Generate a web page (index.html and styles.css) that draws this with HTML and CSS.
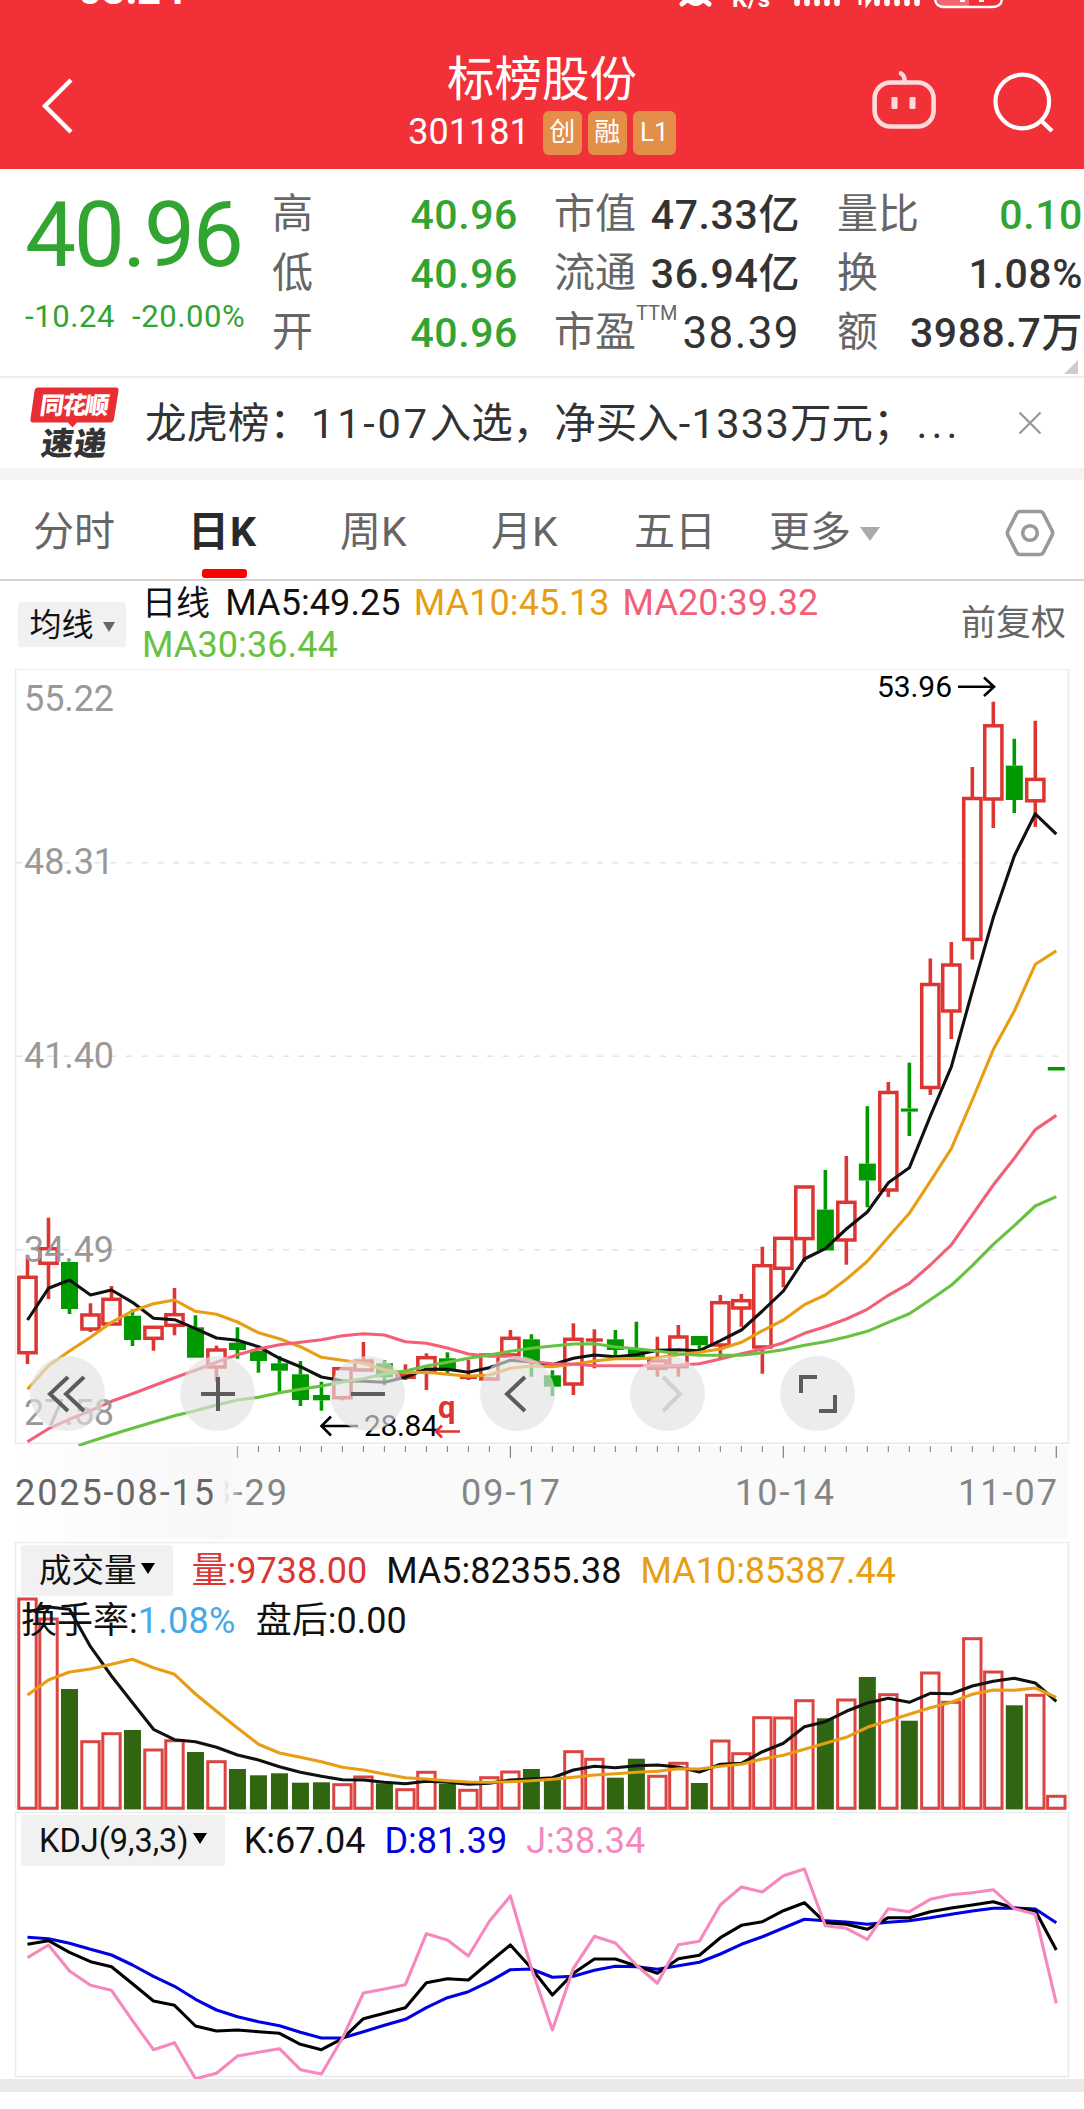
FILE: index.html
```html
<!DOCTYPE html>
<html lang="zh-CN">
<head>
<meta charset="utf-8">
<title>标榜股份 301181</title>
<link rel="stylesheet" href="styles.css">
</head>
<body>
<header class="header">
  <svg class="status" viewBox="0 0 1084 20" aria-hidden="true">
    <text x="78" y="3.5" class="status-time" textLength="107">03:24</text>
    <path d="M682 4 Q695 -8 709 4" stroke="#fff" stroke-width="5" fill="none" stroke-linecap="round"/>
    <path d="M685 0 H706 Q696 12 685 0Z" fill="#fff"/>
    <text x="732" y="7" class="status-unit" textLength="38">K/s</text>
    <path d="M797 -6V3.5M807 -6V3.5M817 -6V3.5M827 -6V3.5M837 -6V3.5M877 -6V3.5M887 -6V3.5M897 -6V3.5M907 -6V3.5M917 -6V3.5" stroke="#fff" stroke-width="5.6" stroke-linecap="round"/>
    <path d="M860 -4V5M867 -4V4L872 -3" stroke="#fff" stroke-width="3" fill="none"/>
    <path d="M936 -6H969V7H946Q938 6 936 -2Z" fill="#f76570"/>
    <path d="M935 -6V-2Q935 7 945 7H992Q1002 7 1002 -2V-6" stroke="#fff" stroke-width="2.4" fill="none"/>
    <path d="M960 0H965M979 0H984" stroke="#fff" stroke-width="4"/>
  </svg>
  <div class="bar">
    <svg class="back" viewBox="0 0 36 60"><path d="M32 4L6 30L32 56" fill="none" stroke="#fff" stroke-width="4.400"/></svg>
    <div class="heading">
      <h1 class="name">标榜股份</h1>
      <div class="code-row">
        <span class="code">301181</span>
        <span class="badge">创</span><span class="badge">融</span><span class="badge wide">L1</span>
      </div>
    </div>
    <div class="actions">
      <svg class="robot" viewBox="0 0 66 60">
        <g fill="none" stroke="#ffdadd" stroke-width="4.6">
          <rect x="3.6" y="13.5" width="59" height="44" rx="16"/>
          <path d="M30 4.5Q33.5 6 33.8 13" stroke-linecap="round"/>
        </g>
        <rect x="20.5" y="28" width="6" height="12" rx="1.2" fill="#ffdadd"/><rect x="38.5" y="28" width="6" height="12" rx="1.2" fill="#ffdadd"/>
      </svg>
      <svg class="search" viewBox="0 0 64 64">
        <circle cx="30.3" cy="31.500" r="26.8" fill="none" stroke="#fff" stroke-width="4.200"/>
        <path d="M49 50.5L60 61" stroke="#fff" stroke-width="4.4"/>
      </svg>
    </div>
  </div>
</header>

<section class="quote">
  <div class="last">
    <div class="price">40.96</div>
    <div class="change"><span>-10.24</span><span>-20.00%</span></div>
  </div>
  <dl class="stats ohl">
    <div><dt>高</dt><dd class="down">40.96</dd></div>
    <div><dt>低</dt><dd class="down">40.96</dd></div>
    <div><dt>开</dt><dd class="down">40.96</dd></div>
  </dl>
  <dl class="stats cap">
    <div><dt>市值</dt><dd>47.33亿</dd></div>
    <div><dt>流通</dt><dd>36.94亿</dd></div>
    <div><dt>市盈<sup>TTM</sup></dt><dd class="light">38.39</dd></div>
  </dl>
  <dl class="stats flow">
    <div><dt>量比</dt><dd class="down">0.10</dd></div>
    <div><dt>换</dt><dd>1.08%</dd></div>
    <div><dt>额</dt><dd>3988.7万</dd></div>
  </dl>
  <i class="corner"></i>
</section>

<section class="news">
  <svg class="logo" viewBox="0 0 90 74">
    <path d="M8 0.5H86Q89 0.5 88.5 4L84 32Q83.500 35.500 80 35.500H47L42.500 40.500L38 35.500H3Q0 35.500 0.500 32L4.500 4Q5 0.500 8 0.500Z" fill="#e72f33"/>
    <text transform="translate(9 26.500) skewX(-8)" class="logo-top" textLength="69">同花顺</text>
    <text transform="translate(10 68) skewX(-8)" class="logo-bottom" textLength="65">速递</text>
  </svg>
  <p class="headline">龙虎榜：<span class="n1">11-07</span>入选，净买入<span class="n2">-1333</span>万元；<span class="dots">...</span></p>
  <svg class="close" viewBox="0 0 24 24"><path d="M1.500 1.500L22.500 22.500M22.500 1.500L1.500 22.500" stroke="#999" stroke-width="2.300"/></svg>
</section>

<nav class="tabs">
  <a>分时</a><a class="on">日K</a><a>周K</a><a>月K</a><a>五日</a><a class="more">更多<i class="tri"></i></a>
  <svg class="hex" viewBox="0 0 50 48"><g fill="none" stroke="#999" stroke-width="3.600"><path d="M15 2.500H35Q37 2.500 38 4L47.200 22Q48 24 47.200 26L38 44Q37 45.500 35 45.500H15Q13 45.500 12 44L2.800 26Q2 24 2.800 22L12 4Q13 2.500 15 2.500Z"/><circle cx="25" cy="24" r="7.300"/></g></svg>
</nav>

<section class="ma">
  <button class="pick ma-pick">均线<i class="tri"></i></button>
  <p class="ma-list"><span>日线</span><span>MA5:49.25</span><span class="c-orange">MA10:45.13</span><span class="c-pink">MA20:39.32</span><span class="c-green">MA30:36.44</span></p>
  <span class="adjust">前复权</span>
</section>

<section class="panel kline">
  <svg id="kline" viewBox="0 669 1084 873"></svg>
  <div class="controls">
    <button><svg viewBox="0 0 40 40"><path d="M22 3L4 20L22 37M38 3L20 20L38 37"/></svg></button>
    <button><svg viewBox="0 0 40 40"><path d="M3 20H37M20 3V37"/></svg></button>
    <button><svg viewBox="0 0 40 40"><path d="M3 20H37"/></svg></button>
    <button><svg viewBox="0 0 40 40"><path d="M27 3L9 20L27 37"/></svg></button>
    <button class="off"><svg viewBox="0 0 40 40"><path d="M15 3L32 20L15 37"/></svg></button>
    <button><svg viewBox="0 0 40 40"><path d="M3 19V3H19M37 21V37H21"/></svg></button>
  </div>
</section>

<section class="panel volume">
  <svg id="volume" viewBox="0 1542 1084 270"></svg>
  <div class="legend">
    <p><button class="pick">成交量<i class="tri"></i></button><span class="c-red">量:9738.00</span><span>MA5:82355.38</span><span class="c-orange">MA10:85387.44</span></p>
    <p class="second"><span>换手率:<b>1.08%</b></span><span>盘后:0.00</span></p>
  </div>
</section>

<section class="panel kdj">
  <svg id="kdj" viewBox="0 1812 1084 267"></svg>
  <div class="legend">
    <p><button class="pick">KDJ(9,3,3)<i class="tri"></i></button><span>K:67.04</span><span class="c-blue">D:81.39</span><span class="c-rose">J:38.34</span></p>
  </div>
</section>
<div class="band"></div>
<script src="chart.js"></script>
</body>
</html>
```
FILE: styles.css
```css
* { box-sizing: border-box; margin: 0; padding: 0; }
body { width: 1084px; height: 2109px; overflow: hidden; background: #fff; color: #111; font-family: Roboto, "Noto Sans CJK SC", sans-serif; }
svg { display: block; }
button { border: 0; font: inherit; color: inherit; }
i { font-style: normal; }

.header { height: 169px; background: #f23037; color: #fff; display: flex; flex-direction: column; }
.status { width: 1084px; height: 20px; }
.status text { fill: #fff; }
.status-time { font-size: 42px; font-weight: 700; }
.status-unit { font-size: 24px; font-weight: 700; }
.bar { flex: 1; display: grid; grid-template-columns: 300px 484px 300px; }
.back { width: 36px; height: 60px; margin: 56px 0 0 39px; }
.heading { display: flex; flex-direction: column; align-items: center; }
.name { font-size: 47.500px; font-weight: 400; line-height: 60px; margin-top: 30px; }
.code-row { display: flex; align-items: center; gap: 6px; height: 44px; margin-top: 1px; }
.code { font-size: 36px; margin-right: 7px; line-height: 40px; padding-bottom: 2px; }
.badge { width: 39px; height: 44px; border-radius: 6px; background: #e38e49; font-size: 26px; line-height: 42px; text-align: center; }
.badge.wide { width: 43px; }
.actions { display: flex; }
.robot { width: 66px; height: 60px; margin: 49px 0 0 87px; }
.search { width: 64px; height: 64px; margin: 50px 0 0 55px; }

.quote { height: 209px; border-bottom: 2px solid #eee; position: relative; display: flex; padding-top: 21px; }
.last { width: 272px; padding-left: 25px; color: #32a432; }
.price { font-size: 91px; line-height: 90px; letter-spacing: -2.400px; }
.change { display: flex; gap: 17px; font-size: 31px; line-height: 40px; margin-top: 17px; letter-spacing: .6px; }
.stats { font-size: 41px; }
.stats div { display: flex; justify-content: space-between; height: 59px; line-height: 48px; }
.stats dt { color: #666; white-space: nowrap; }
.stats dd { color: #333; font-weight: 500; white-space: nowrap; letter-spacing: .6px; padding-top: 1px; }
.stats dd.down { color: #32a432; }
.stats dd.light { font-weight: 400; font-size: 44px; letter-spacing: 1.400px; }
.stats sup { font-size: 20px; line-height: 0; vertical-align: 26px; }
.ohl { width: 246px; }
.cap { width: 246px; margin-left: 36px; }
.flow { width: 246px; margin-left: 37px; }
.corner { position: absolute; right: 6px; bottom: 2px; border: 7.5px solid; border-color: transparent #ccc #ccc transparent; }

.news { height: 102px; border-bottom: 12px solid #f4f4f4; display: flex; align-items: center; }
.logo { width: 90px; height: 74px; margin-left: 30px; margin-top: 2px; }
.logo-top { font: 900 24px "Noto Sans CJK SC"; fill: #fff; }
.logo-bottom { font: 900 32px "Noto Sans CJK SC"; fill: #333; }
.headline { width: 850px; margin-left: 25px; font-size: 41.500px; color: #333; white-space: nowrap; line-height: 60px; padding-top: 1px; }
.n1 { letter-spacing: 2.800px; }
.n2 { letter-spacing: 1.300px; }
.dots { letter-spacing: 4px; margin-left: 2px; }
.close { width: 24px; height: 24px; margin-left: 23px; }

.tabs { height: 101px; border-bottom: 2px solid #d4d4d4; display: flex; position: relative; font-size: 41px; line-height: 60px; padding: 22px 0 0 33px; color: #666; }
.tabs a { width: 155px; height: 79px; white-space: nowrap; }
.tabs a:nth-child(2) { width: 152px; }
.tabs a:nth-child(3) { width: 151px; }
.tabs a:nth-child(4) { width: 143px; }
.tabs a:nth-child(5) { width: 135px; }
.tabs .on { color: #2a2a2a; font-weight: 700; position: relative; letter-spacing: 1px; }
.tabs .on::after { content: ""; position: absolute; left: 14px; bottom: 3px; width: 45px; height: 9px; border-radius: 3px; background: #f00; }
.tabs .more { width: 236px; }
.tri { display: inline-block; border: 7px solid transparent; border-top: 10px solid #000; border-bottom: 0; vertical-align: middle; margin-left: 5px; }
.more .tri { border-width: 14px 10.500px 0; border-top-color: #aaa; margin-left: 9px; position: relative; top: -1px; }
.hex { width: 50px; height: 48px; margin-top: 7px; }

.ma { height: 88px; display: flex; padding-left: 18px; position: relative; }
.pick { background: #f1f1f1; border-radius: 3px; white-space: nowrap; }
.ma-pick { width: 108px; height: 45px; margin-top: 21px; font-size: 32px; line-height: 42px; }
.ma-pick .tri { border-width: 10px 6.500px 0; border-top-color: #666; margin-left: 9px; }
.ma-list { width: 740px; margin-left: 16px; padding-top: 1px; display: flex; flex-wrap: wrap; align-content: flex-start; font-size: 36px; line-height: 42px; column-gap: 13px; letter-spacing: .1px; }
.ma-list span:first-child { font-size: 34px; margin-right: 2px; }
.adjust { font-size: 35px; line-height: 42px; margin: 22px 0 0 79px; color: #666; white-space: nowrap; }
.c-orange { color: #e79d14; } .c-pink { color: #f45f78; } .c-green { color: #67c241; }
.c-red { color: #dc3633; } .c-blue { color: #0000e0; } .c-rose { color: #f588be; }

.panel { position: relative; }
.kline { height: 873px; } .volume { height: 270px; } .kdj { height: 267px; }
.panel > svg { width: 1084px; height: 100%; }
.panel > svg text { font-family: Roboto, sans-serif; }
.controls { position: absolute; left: 30px; top: 687px; display: flex; gap: 75px; }
.controls button { width: 75px; height: 75px; border-radius: 50%; background: rgba(226, 226, 226, .65); display: grid; place-items: center; }
.controls svg { width: 40px; height: 40px; fill: none; stroke: #5c5c5c; stroke-width: 4; }
.controls button:first-child svg { margin-left: -4px; }
.controls .off svg { stroke: #d0d0d0; }
.legend { position: absolute; left: 21px; top: 3px; }
.legend p { display: flex; gap: 19px; font-size: 36px; line-height: 53px; white-space: nowrap; }
.legend .pick { height: 51px; padding: 0 18px; font-size: 32.500px; line-height: 48px; }
.legend .tri { position: relative; top: -4px; border-width: 11px 7.500px 0; margin-left: 4px; }
.legend .second { gap: 20px; line-height: 47px; }
.legend b { font-weight: 400; color: #46a9e8; letter-spacing: .3px; }
.band { height: 13px; background: #eaeaea; }
```
FILE: chart.js
```js
const NS = 'http://www.w3.org/2000/svg';
const STEP = 20.996, X0 = 27.5;
const cx = i => X0 + STEP * i;
const RED = '#dc3633', GREEN = '#009900';

function add(svg, tag, attrs, text) {
  const el = document.createElementNS(NS, tag);
  for (const k in attrs) el.setAttribute(k, attrs[k]);
  if (text) el.textContent = text;
  svg.appendChild(el);
  return el;
}
function line(svg, ys, color, start = 0, width = 3.1) {
  const points = ys.map((y, i) => `${cx(i + start).toFixed(1)},${y}`).join(' ');
  add(svg, 'polyline', { points, fill: 'none', stroke: color, 'stroke-width': width, 'stroke-linejoin': 'round' });
}
function frame(svg, y1, y2) {
  add(svg, 'path', { d: `M15.500 ${y1}H1068.500V${y2}H15.500Z`, fill: 'none', stroke: '#eaeaea', 'stroke-width': 1.6 });
}
function label(svg, x, y, w, size, color, text) {
  add(svg, 'text', { x, y, textLength: w, 'font-size': size, fill: color }, text);
}

// direction, body top, body bottom, high, low
const candles = [
  ['r',1277.3,1352.7,1255.3,1364],['r',1248.7,1263.3,1217.7,1299],['g',1262,1309,1262,1314],['r',1315,1329,1303.3,1332],
  ['r',1299.3,1324,1286,1324],['g',1315.7,1340,1309.3,1346],['r',1327.3,1338.3,1327.3,1350.7],['r',1314.7,1325.3,1288,1335.3],
  ['g',1327.3,1357.7,1315.3,1357.7],['r',1350,1367,1345.7,1381.7],['g',1342.7,1350,1327.3,1358.7],['g',1350.7,1361,1350.7,1372.7],
  ['g',1363.3,1370.7,1356,1392],['g',1374.3,1400,1361,1406],['g',1395,1400.3,1381.7,1410.7],['r',1368.7,1397.7,1368.7,1400.3],
  ['r',1361,1370,1342,1371.3],['g',1363.3,1377.3,1360,1385.3],['r',1374.3,1377.3,1364.3,1380],['r',1357.7,1371.7,1353.3,1390],
  ['g',1358.3,1371,1352.3,1373.3],['r',1376.7,1378,1360,1380],['r',1355,1379,1355,1379],['r',1338.3,1355,1330,1355],
  ['g',1339.3,1361,1334.3,1376.7],['g',1375.3,1386.7,1370.3,1396],['r',1339.3,1384,1323.3,1395],['r',1339.3,1340.2,1329.3,1368.3],
  ['g',1339.3,1350,1330,1355.7],['g',1348.3,1357.3,1321.7,1357.3],['r',1361,1368.3,1336.7,1376.7],['r',1337,1366.7,1325,1376.7],
  ['g',1336,1345.3,1336,1350.7],['r',1302.7,1345,1295,1359],['r',1300.7,1308,1294,1326.7],['r',1265.7,1347,1246.7,1373.7],
  ['r',1238.3,1268.3,1238.3,1287.3],['r',1187,1238.600,1187,1262],['g',1209.6,1250.5,1170,1250.5],['r',1202.3,1240,1156,1264.7],
  ['g',1163.6,1180.5,1106.2,1207.3],['r',1092.5,1190,1082,1197],['g',1108.5,1111.6,1062.6,1136],['r',984.5,1087.5,958.5,1095],
  ['r',965,1011,942,1039],['r',798.5,939.4,767,959.6],['r',725.8,799,701.7,828],['g',765.6,800,738.8,813],
  ['r',779.4,800.8,720.8,826.9],['g',1067,1070.5,1067,1070.5]
];
const ma5 = [1320,1288.3,1280,1295,1290,1302.3,1318.3,1319.7,1328.7,1338,1340.3,1346.7,1358.3,1366.7,1377,1380.7,1381.3,1382.3,1377.3,1369,1369.3,1372.3,1367.7,1360.3,1362,1364.7,1358.3,1355,1356.7,1354.7,1350.3,1349.7,1350.7,1340.7,1330,1311,1291,1259,1248.7,1229,1212,1182.8,1167.8,1116.2,1066.8,991,917.6,856,813.8,834.1];
const ma10 = [1389.3,1365.7,1351,1337.3,1322.3,1311,1303.7,1300,1311.3,1314.3,1322,1332.7,1338.7,1346.7,1357.3,1360.3,1363.3,1369.7,1372.7,1372.3,1374.3,1376.3,1375,1368.3,1366,1366.7,1364.3,1361,1358.7,1358.7,1357.7,1354.7,1352.3,1349,1342.3,1330.7,1320,1304.7,1295,1279.3,1261.3,1237.3,1213.3,1181.3,1148.7,1100,1049.6,1011,964.3,950.9];
const ma20 = [1441.7,1428.7,1419.3,1410.7,1401.3,1393.7,1385.7,1377.7,1370.3,1362.3,1354.7,1349,1344.7,1342.3,1339.7,1335.7,1333.7,1335,1341.7,1343.3,1348,1354,1356.3,1356.3,1361.7,1363.7,1364,1365.7,1365.7,1365.7,1365.7,1365.3,1363.7,1359,1353.7,1349,1342.7,1333.3,1326.7,1319,1309.3,1295.3,1283.3,1265,1244.8,1214.9,1185,1158.3,1129.6,1115.4];
const ma30 = [1441.5,1434.7,1428.3,1422,1415.7,1410.7,1405,1400,1397.3,1392.7,1389.3,1386,1382,1378.7,1374,1371,1366,1362.3,1358.3,1355,1351.3,1348.3,1346,1344,1343.7,1347,1348.7,1351,1353.7,1355.3,1355.3,1355.3,1352.7,1349.7,1345.3,1341.7,1337,1331.3,1322.3,1313.7,1299.7,1285.3,1265.7,1244.3,1225.7,1206,1196.7];

const k = document.getElementById('kline');
add(k, 'rect', { x: 15.5, y: 1446, width: 1053, height: 93, fill: '#fafafa' });
frame(k, 669, 1443.300);
for (const y of [862.7, 1056.2, 1249.700])
  add(k, 'path', { d: `M16 ${y}H1064`, stroke: '#e4e4e4', 'stroke-width': 1.4, 'stroke-dasharray': '6.2 9.5' });

function candle(svg, [dir, top, bottom, high, low], i) {
  const x = cx(i), color = dir === 'r' ? RED : GREEN;
  const wick = d => add(svg, 'path', { d, stroke: color, 'stroke-width': 3.6 });
  if (high < top) wick(`M${x} ${high}V${top}`);
  if (low > bottom) wick(`M${x} ${bottom}V${low}`);
  if (dir === 'g') add(svg, 'rect', { x: x - 8.5, y: top, width: 17, height: bottom - top, fill: color });
  else if (bottom - top < 2) add(svg, 'rect', { x: x - 8.5, y: top - 1, width: 17, height: 3.4, fill: color });
  else add(svg, 'rect', { x: x - 8.6, y: top, width: 17.2, height: bottom - top, fill: 'none', stroke: color, 'stroke-width': 3.5 });
}
candles.forEach((c, i) => candle(k, c, i));
line(k, ma5, '#111');
line(k, ma10, '#e79d14');
line(k, ma20, '#f45f78');
line(k, ma30, '#67c241', 3);
add(k, 'path', { d: `M78.500 1445.700L${cx(3)} 1441.500`, stroke: '#67c241', 'stroke-width': 3 });

[['55.22', 711], ['48.31', 874.300], ['41.40', 1068], ['34.49', 1261.500], ['27.58', 1425]]
  .forEach(([t, y]) => label(k, 24, y, 90, 36, '#999', t));
label(k, 877, 697, 75, 30, '#000', '53.96');
label(k, 364, 1436, 74, 30, '#000', '28.84');
add(k, 'path', { d: 'M958 686.700H994M984 677.500L994 686.700L984 696M358 1426H322M331 1416.500L321.500 1426L331 1435.500', fill: 'none', stroke: '#000', 'stroke-width': 2.6 });
add(k, 'text', { x: 438, y: 1418, 'font-size': 31, 'font-weight': 700, fill: RED }, 'q');
add(k, 'path', { d: 'M460 1431.500H436M442 1425.500L436 1431.500L442 1437.500', fill: 'none', stroke: RED, 'stroke-width': 2.6 });

for (let i = 10; i < 50; i++) {
  const major = (i - 10) % 13 === 0;
  add(k, 'path', { d: `M${cx(i)} 1446V${major ? 1458 : 1452}`, stroke: '#888', 'stroke-width': major ? 1.3 : 1.1 });
}
label(k, 188, 1504.7, 99, 36, '#858585', '08-29');
const defs = add(k, 'defs', {});
const fade = add(defs, 'linearGradient', { id: 'fade' });
add(fade, 'stop', { offset: 0, 'stop-color': '#fff' });
add(fade, 'stop', { offset: .92, 'stop-color': '#f7f7f7' });
add(fade, 'stop', { offset: 1, 'stop-color': '#fafafa', 'stop-opacity': 0 });
add(k, 'rect', { x: 14, y: 1446, width: 228, height: 93, fill: 'url(#fade)' });
label(k, 15, 1504.7, 199, 36, '#666', '2025-08-15');
label(k, 461, 1504.7, 99, 36, '#858585', '09-17');
label(k, 735, 1504.7, 99, 36, '#858585', '10-14');
label(k, 958, 1504.7, 99, 36, '#858585', '11-07');

// direction follows the candle, except for the last session
const vol = [1599,1619,1689,1741.7,1733.7,1730,1750,1740.7,1752,1761.7,1769,1775.3,1773.3,1782.7,1782.3,1784.7,1777,1783.3,1789.7,1772.3,1784,1790.3,1777.7,1772,1769,1780,1751.7,1759.3,1777.7,1758.7,1776.3,1763.3,1783,1741,1753.7,1717.7,1718,1700.7,1718.3,1700,1677,1694.7,1720.7,1673,1702.3,1638.7,1672,1705.3,1695.3,1796.3];
const v = document.getElementById('volume');
frame(v, 1542.500, 1806.700);
vol.forEach((y, i) => {
  const x = cx(i);
  if (candles[i][0] === 'g' && i < 49) add(v, 'rect', { x: x - 8.5, y, width: 17, height: 1809.4 - y, fill: '#306612' });
  else add(v, 'rect', { x: x - 8.7, y, width: 17.4, height: 1808.300 - y, fill: 'none', stroke: '#dc4442', 'stroke-width': 3 });
});
line(v, [1612,1607,1609.3,1646.7,1676,1702.7,1729.3,1739.7,1741.7,1747.3,1755,1760,1766.7,1772.3,1776.3,1779.7,1780,1782.3,1783.7,1781.3,1782.3,1784.3,1783.3,1780,1779,1777.7,1770,1766.3,1767.7,1765.7,1765,1767,1772,1764.3,1763.3,1751.7,1743.3,1726.7,1721.7,1711.3,1703,1698.3,1702.3,1693.3,1693.7,1686,1681.3,1678.3,1683,1701.3], '#111');
line(v, [1695,1680,1672,1669,1664.3,1659.3,1667.7,1674.3,1694,1711.3,1728,1744.3,1753,1757.3,1761.7,1767.3,1770,1774,1777.7,1779,1780.7,1782,1782.3,1781.7,1780.7,1779.3,1777.3,1775,1773.7,1772.3,1771.3,1768.7,1769,1766.3,1764.3,1759,1755.3,1749.3,1743.3,1737.3,1727.3,1720.7,1714.3,1707.7,1702.3,1694.3,1690,1690.3,1688,1697.3], '#e79d14');

// oscillator samples, three units per pixel below the panel origin
const j = document.getElementById('kdj');
frame(j, 1812.500, 2076.500);
const px = a => a.map(n => +(1810 + n / 3).toFixed(1));
line(j, px([382,386,400,418,435,465,499,529,568,600,620,635,647,667,684,684,665,646,628,593,563,545,515,479,477,502,499,481,469,470,478,467,457,432,403,380,354,328,332,336,343,337,332,323,313,303,295,294,297,338]), '#0000e0');
line(j, px([403,392,427,455,470,521,573,586,648,663,660,665,670,703,719,686,626,610,593,518,506,510,457,405,475,555,490,447,447,468,490,446,436,383,346,335,302,278,338,343,358,323,323,305,294,285,275,294,302,420]), '#000');
line(j, px([443,405,483,526,541,632,719,698,806,790,738,727,716,779,792,685,549,537,524,371,390,438,334,258,475,660,475,379,399,466,520,404,394,284,231,246,197,177,347,355,388,296,305,268,254,248,239,296,313,580]), '#f588be');
```
